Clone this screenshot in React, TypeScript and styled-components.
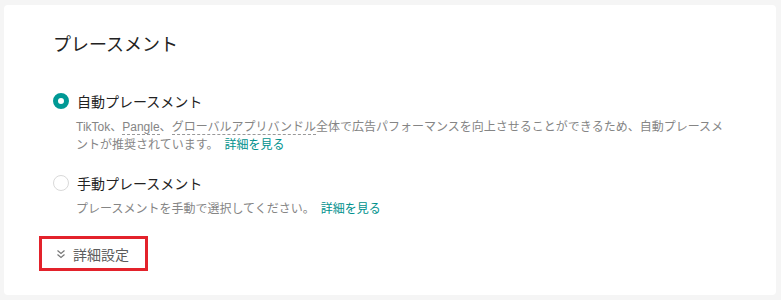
import React from 'react';
import styled, { createGlobalStyle } from 'styled-components';

const GlobalStyle = createGlobalStyle`
  html, body {
    margin: 0;
    padding: 0;
    background: #f5f5f5;
  }
  body {
    font-family: "Liberation Sans", "Noto Sans CJK JP", sans-serif;
    color: #222;
  }
`;

const Page = styled.div`
  padding: 5px 5px 5px 4px;
`;

const Card = styled.section`
  background: #fff;
  border-radius: 4px;
  height: 290px;
  box-sizing: border-box;
  padding: 26px 49px 0 49px;
`;

const Title = styled.h2`
  margin: 0 0 32px;
  font-size: 18px;
  line-height: 28px;
  font-weight: 400;
  color: #222;
`;

const Option = styled.div<{ $gap: number }>`
  margin-bottom: ${p => p.$gap}px;
`;

const RadioRow = styled.label`
  display: flex;
  align-items: center;
  gap: 8px;
  height: 20px;
  font-size: 14px;
  color: #222;
  cursor: pointer;
`;

const Radio = styled.span<{ $checked?: boolean }>`
  box-sizing: border-box;
  width: 16px;
  height: 16px;
  border-radius: 50%;
  flex-shrink: 0;
  border: ${p => (p.$checked ? '5px solid #009995' : '1px solid #d9d9d9')};
  background: #fff;
`;

const Desc = styled.p`
  margin: 7px 0 0 23px;
  width: 656px;
  font-size: 12px;
  line-height: 18px;
  color: #858585;
`;

const Term = styled.span`
  border-bottom: 1px dashed #999;
`;

const Link = styled.a`
  margin-left: 6px;
  color: #00918d;
  text-decoration: none;
  cursor: pointer;
`;

const AdvancedButton = styled.button`
  display: flex;
  align-items: center;
  gap: 7px;
  margin-left: -14px;
  height: 35px;
  box-sizing: border-box;
  padding: 0 16px 0 14px;
  border: 3px solid #e3222b;
  background: #fff;
  font-family: inherit;
  font-size: 14px;
  color: #5c5c5c;
  cursor: pointer;
`;

const DoubleChevron = () => (
  <svg width="10" height="10" viewBox="0 0 10 10" fill="none" stroke="#777" strokeWidth="1.2">
    <polyline points="1.5,1.5 5,4.5 8.5,1.5" />
    <polyline points="1.5,5.5 5,8.5 8.5,5.5" />
  </svg>
);

export default function App() {
  return (
    <Page>
      <GlobalStyle />
      <Card>
        <Title>プレースメント</Title>
        <Option $gap={19}>
          <RadioRow>
            <Radio $checked />
            自動プレースメント
          </RadioRow>
          <Desc>
            TikTok、<Term>Pangle</Term>、<Term>グローバルアプリバンドル</Term>
            全体で広告パフォーマンスを向上させることができるため、自動プレースメントが推奨されています。
            <Link>詳細を見る</Link>
          </Desc>
        </Option>
        <Option $gap={18}>
          <RadioRow>
            <Radio />
            手動プレースメント
          </RadioRow>
          <Desc>
            プレースメントを手動で選択してください。
            <Link>詳細を見る</Link>
          </Desc>
        </Option>
        <AdvancedButton>
          <DoubleChevron />
          詳細設定
        </AdvancedButton>
      </Card>
    </Page>
  );
}
